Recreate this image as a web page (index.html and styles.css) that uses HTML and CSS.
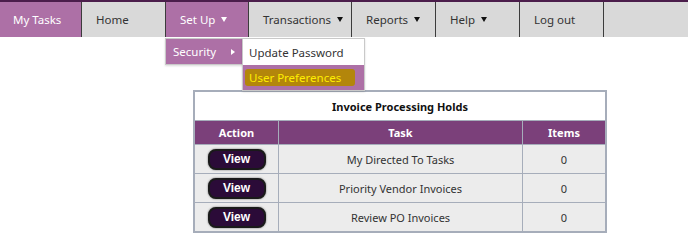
FILE: index.html
```html
<!DOCTYPE html>
<html lang="en">
  <head>
    <meta charset="UTF-8" />
    <meta name="viewport" content="width=device-width, initial-scale=1.0" />
    <title>My Tasks</title>
    <link rel="stylesheet" href="styles.css">
  </head>
  <body>
    <nav class="top-nav">
      <a class="nav-item nav-active nav-tasks">My Tasks</a>
      <a class="nav-item nav-home">Home</a>
      <div class="nav-item nav-active nav-setup">
        Set Up <span class="caret"></span>
        <ul class="dropdown">
          <li class="dropdown-item has-sub">
            Security <span class="sub-caret"></span>
            <ul class="submenu">
              <li class="submenu-item">Update Password</li>
              <li class="submenu-item submenu-hover"><span class="highlight">User Preferences</span></li>
            </ul>
          </li>
        </ul>
      </div>
      <a class="nav-item nav-transactions">Transactions <span class="caret"></span></a>
      <a class="nav-item nav-reports">Reports <span class="caret"></span></a>
      <a class="nav-item nav-help">Help <span class="caret"></span></a>
      <a class="nav-item nav-logout">Log out</a>
    </nav>

    <main class="content">
      <table class="holds-table">
        <thead>
          <tr>
            <th colspan="3" class="holds-title">Invoice Processing Holds</th>
          </tr>
          <tr class="holds-head">
            <th class="col-action">Action</th>
            <th class="col-task">Task</th>
            <th class="col-items">Items</th>
          </tr>
        </thead>
        <tbody>
          <tr>
            <td><button class="view-button">View</button></td>
            <td>My Directed To Tasks</td>
            <td>0</td>
          </tr>
          <tr>
            <td><button class="view-button">View</button></td>
            <td>Priority Vendor Invoices</td>
            <td>0</td>
          </tr>
          <tr>
            <td><button class="view-button">View</button></td>
            <td>Review PO Invoices</td>
            <td>0</td>
          </tr>
        </tbody>
      </table>
    </main>
  </body>
</html>
```

FILE: styles.css
```css
body {
  margin: 0;
  padding: 0;
  background-color: #fff;
  font-family: "Noto Sans", "Open Sans", sans-serif;
  color: #333;
}

.top-nav {
  display: flex;
  height: 35px;
  border-top: 2px solid #4b1d4b;
  background-color: #d9d9d9;
}

.nav-item {
  position: relative;
  display: flex;
  align-items: center;
  box-sizing: border-box;
  padding-left: 14px;
  border-right: 1px solid #3c3c3c;
  font-size: 11.5px;
  color: #333;
  text-decoration: none;
  cursor: pointer;
}

.nav-active {
  background-color: #ad70a6;
  color: #fff;
}

.nav-tasks { width: 82px; padding-left: 13px; }
.nav-home { width: 84px; }
.nav-setup { width: 83px; }
.nav-transactions { width: 103px; }
.nav-reports { width: 84px; }
.nav-help { width: 84px; }
.nav-logout { width: 84px; }

.caret {
  width: 0;
  height: 0;
  margin-left: 6px;
  border-left: 3px solid transparent;
  border-right: 3px solid transparent;
  border-top: 5px solid currentColor;
}

.nav-item .caret {
  color: #111;
}

.nav-active .caret {
  color: #fff;
}

.dropdown,
.submenu {
  list-style: none;
  margin: 0;
  padding: 0;
  position: absolute;
}

.dropdown {
  top: 36px;
  left: -1px;
  width: 76px;
  background-color: #ad70a6;
  border: 1px solid #c9c9c9;
  box-shadow: 0 1px 2px rgba(0, 0, 0, 0.15);
}

.dropdown-item {
  position: relative;
  height: 25px;
  display: flex;
  align-items: center;
  padding-left: 7px;
  color: #fff;
  font-size: 11.5px;
}

.sub-caret {
  width: 0;
  height: 0;
  margin-left: 15px;
  border-top: 3px solid transparent;
  border-bottom: 3px solid transparent;
  border-left: 4px solid #fff;
}

.submenu {
  top: -1px;
  left: 76px;
  width: 121px;
  background-color: #fff;
  border: 1px solid #c9c9c9;
  box-shadow: 0 1px 2px rgba(0, 0, 0, 0.15);
}

.submenu-item {
  height: 26px;
  display: flex;
  align-items: center;
  padding-left: 6px;
  color: #333;
  font-size: 11.5px;
  white-space: nowrap;
}

.submenu-hover {
  height: 25px;
  padding-left: 2px;
  background-color: #ad70a6;
}

.highlight {
  background-color: #b3860b;
  color: #ffee00;
  padding: 1px 14px 1px 4px;
  border-radius: 3px;
}

.content {
  padding: 53px 0 0 193px;
}

.holds-table {
  width: 414px;
  border-collapse: collapse;
  border: 2px solid #a6adba;
  font-size: 11px;
}

.holds-table th,
.holds-table td {
  border: 1px solid #a6adba;
  text-align: center;
  padding: 0;
}

.holds-title {
  height: 28px;
  background-color: #fff;
  color: #111;
  font-size: 11px;
  font-weight: bold;
}

.holds-head th {
  height: 23px;
  background-color: #7b407a;
  color: #fff;
  font-size: 11px;
  font-weight: bold;
}

.col-action { width: 83px; }
.col-items { width: 82px; }

.holds-table td {
  height: 28px;
  background-color: #ececec;
  color: #333;
}

.view-button {
  display: block;
  margin: 0 auto;
  width: 58px;
  height: 21px;
  background-color: #2b0b38;
  color: #fff;
  font-family: "Liberation Sans", Arial, sans-serif;
  font-size: 12px;
  font-weight: bold;
  border: 2px solid #1a1a1a;
  border-radius: 8px;
  box-shadow: 0 0 2px rgba(0, 0, 0, 0.6);
  cursor: pointer;
}
```
